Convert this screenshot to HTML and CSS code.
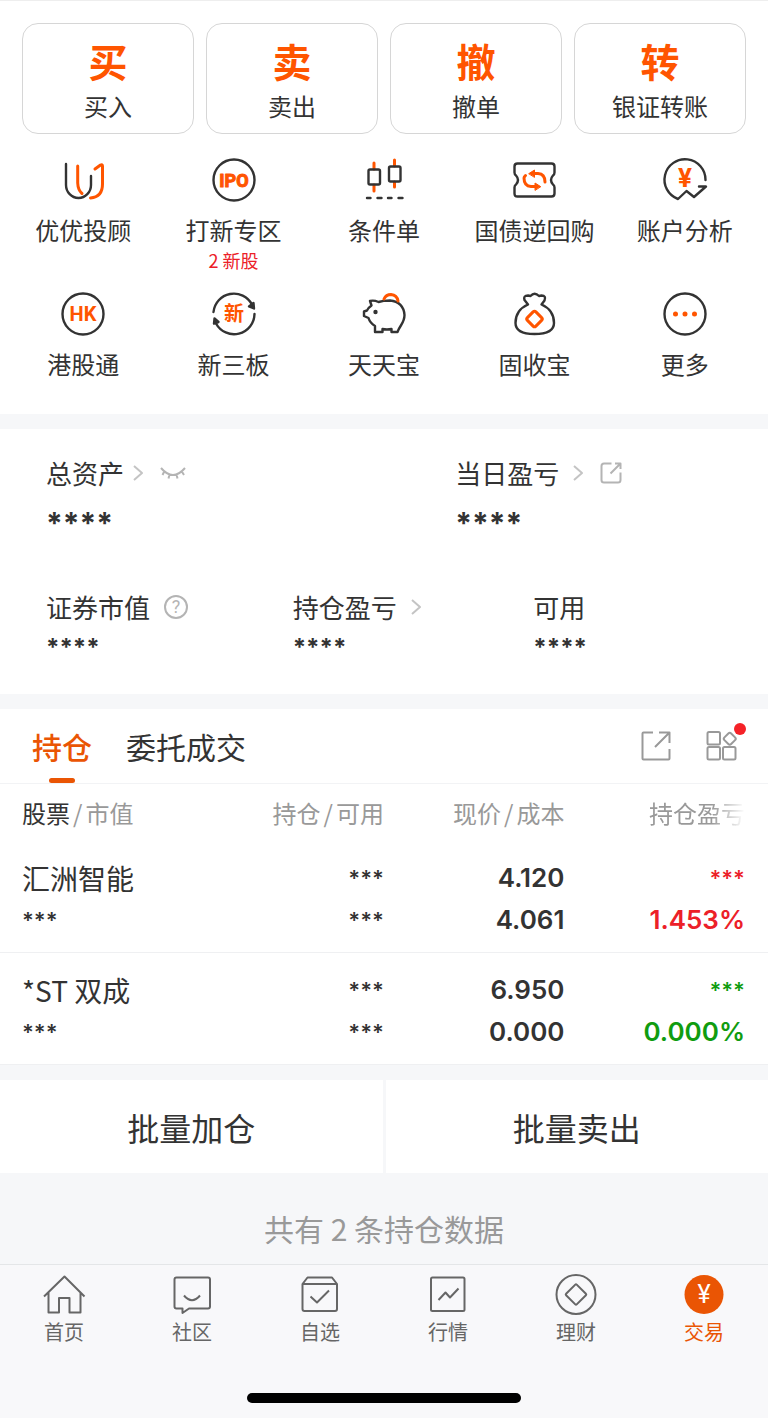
FILE: index.html
```html
<!DOCTYPE html>
<html lang="zh-CN">
<head>
	<meta charset="utf-8">
	<meta name="viewport" content="width=device-width, initial-scale=1">
	<title>交易</title>
	<link rel="stylesheet" href="styles.css">
</head>

<body>

<main>

<section class="panel trade">
  <div class="actions">
    <button><b>买</b><span>买入</span></button>
    <button><b>卖</b><span>卖出</span></button>
    <button><b>撤</b><span>撤单</span></button>
    <button><b>转</b><span>银证转账</span></button>
  </div>

  <nav class="services">
    <a href="#">
      <svg class="icon" viewBox="0 0 44 44">
        <path d="M5 6V27a12.500 13 0 0 0 25 0V18"/>
        <path class="hot" d="M16.700 8V25Q17 32 21 35.500M34 11l5.500-4q2-1 2 1V26q0 13-12 14"/>
      </svg>
      <span>优优投顾</span>
    </a>
    <a href="#">
      <svg class="icon" viewBox="0 0 44 44">
        <circle cx="22" cy="22" r="20.500"/>
        <text class="ipo" x="22" y="28.500">IPO</text>
      </svg>
      <span>打新专区</span>
      <em>2 新股</em>
    </a>
    <a href="#">
      <svg class="icon" viewBox="0 0 44 44">
        <path class="hot" d="M12 5V11M12 27V33M32.500 2V8M32.500 24V29"/>
        <rect x="6.500" y="11.500" width="11.500" height="15" rx="1.500"/>
        <rect x="27" y="8.500" width="11.500" height="15" rx="1.500"/>
        <path d="M5 40h3.500M15.500 40H19.500M26 40h3.500M36.500 40H40.500"/>
      </svg>
      <span>条件单</span>
    </a>
    <a href="#">
      <svg class="icon" viewBox="0 0 44 44">
        <path d="M5.500 5.500H39.500Q42.500 5.500 42.500 8.500V14.500Q42.500 16.500 41 17.500Q37 22 41 26.500Q42.500 27.500 42.500 29.500V35.500Q42.500 38.500 39.500 38.500H5.500Q2.500 38.500 2.500 35.500V29.500Q2.500 27.500 4 26.500Q8 22 4 17.500Q2.500 16.500 2.500 14.500V8.500Q2.500 5.500 5.500 5.500Z"/>
        <path class="hot" d="M20 15.500H26Q33 16 33 24M25 28.500H19Q12 28 12 20Q12 19 13.500 17.500"/>
        <path class="hot fill" d="M17 15.500l5.500-3.500v7zM28.500 28.500l-5.500-3.500v7z"/>
      </svg>
      <span>国债逆回购</span>
    </a>
    <a href="#">
      <svg class="icon" viewBox="0 0 44 44">
        <path d="M42.500 22A20.500 20.500 0 1 0 15 41L23.500 33L31 39L43 28.500H36"/>
        <text class="yen" x="22" y="29">¥</text>
      </svg>
      <span>账户分析</span>
    </a>
    <a href="#">
      <svg class="icon" viewBox="0 0 44 44">
        <circle cx="22" cy="22" r="20.500"/>
        <text class="hk" x="22" y="29">HK</text>
      </svg>
      <span>港股通</span>
    </a>
    <a href="#">
      <svg class="icon" viewBox="0 0 44 44">
        <path d="M1.500 20A20.500 20.500 0 0 1 40 12.500M42.500 22A20.500 20.500 0 0 1 4 31.500"/>
        <path class="solid" d="M37 14.500L41.500 11L42 16.500zM2 31.500L2.500 26.500L6.500 30z"/>
        <text class="xin" x="22" y="29">新</text>
      </svg>
      <span>新三板</span>
    </a>
    <a href="#">
      <svg class="icon" viewBox="0 0 44 44">
        <path d="M8 9Q12 8 16.500 10Q21 8.500 28 8.500C37 9 42 15 42.500 23C42.500 31 38 33 35.500 40H29.500V37Q25 38 20.500 37V40H13V34Q8 31 6.500 26L2 24V19.500L5 18.500Q6.500 15.500 9.500 13.500Z"/>
        <circle class="solid" cx="13.500" cy="20" r="1"/>
        <path class="hot" d="M22 7Q24 2.500 29 2.500Q35 3 36 9"/>
      </svg>
      <span>天天宝</span>
    </a>
    <a href="#">
      <svg class="icon" viewBox="0 0 44 44">
        <path d="M16 12.500C8 16 3.500 23 3.500 31C3.500 39 11 42 22.500 42S42 39 42 31C42 23 37.500 16 29.500 12.500L32.500 8.500Q34.500 3.500 29.500 3.500L27 4Q22.500-.5 18.500 4L16 3.500Q11 3.500 12.500 8Z"/>
        <rect class="hot" x="16.500" y="21" width="12" height="12" rx="2" transform="rotate(45 22.500 27)"/>
      </svg>
      <span>固收宝</span>
    </a>
    <a href="#">
      <svg class="icon" viewBox="0 0 44 44">
        <circle cx="22" cy="22" r="20.500"/>
        <path class="hot dots" d="M12.500 22h0M22 22h0M31.500 22h0"/>
      </svg>
      <span>更多</span>
    </a>
  </nav>
</section>

<section class="panel assets">
  <div class="totals">
    <div>
      <h3>总资产
        <svg class="arrow" viewBox="0 0 10 16"><path d="M1 1L9 8L1 15"/></svg>
        <button class="plain" aria-label="显示金额">
          <svg class="eye" viewBox="0 0 26 14"><path d="M1 2Q13 16 25 2M4.500 5L2.500 9M9.500 8.500L8.500 12.500M16.500 8.500L17.500 12.500M21.500 5L24 9"/></svg>
        </button>
      </h3>
      <p>****</p>
    </div>
    <div>
      <h3>当日盈亏
        <svg class="arrow wide" viewBox="0 0 10 16"><path d="M1 1L9 8L1 15"/></svg>
        <button class="plain" aria-label="分享">
          <svg class="share" viewBox="0 0 22 22"><path d="M11.500 1.500H4Q1.500 1.500 1.500 4V18Q1.500 20.500 4 20.500H18Q20.500 20.500 20.500 18V10.500M15 1.500H20.500V7M20 2L10.500 11.500"/></svg>
        </button>
      </h3>
      <p>****</p>
    </div>
  </div>
  <div class="details">
    <div>
      <h3>证券市值
        <button class="plain" aria-label="说明">
          <svg class="help" viewBox="0 0 24 24"><circle cx="12" cy="12" r="11"/><text x="12" y="18">?</text></svg>
        </button>
      </h3>
      <p>****</p>
    </div>
    <div>
      <h3>持仓盈亏
        <svg class="arrow wide" viewBox="0 0 10 16"><path d="M1 1L9 8L1 15"/></svg>
      </h3>
      <p>****</p>
    </div>
    <div>
      <h3>可用</h3>
      <p>****</p>
    </div>
  </div>
</section>

<section class="panel holdings">
  <div class="tabs">
    <button class="tab active">持仓</button>
    <button class="tab">委托成交</button>
    <button class="tool" aria-label="分享">
      <svg class="send" viewBox="0 0 30 30"><path d="M12 1.500H2.500Q1.500 1.500 1.500 2.500V27.500Q1.500 28.500 2.500 28.500H27.500Q28.500 28.500 28.500 27.500V18M18 1.500H28.500V12M28 2L14 16"/></svg>
    </button>
    <button class="tool" aria-label="更多功能">
      <svg class="apps" viewBox="0 0 32 30">
        <rect x="1.500" y="1" width="12.500" height="12.500" rx="1.500"/>
        <rect x="1.500" y="16" width="12.500" height="12.500" rx="1.500"/>
        <rect x="17" y="16" width="12.500" height="12.500" rx="1.500"/>
        <rect x="19" y="3" width="9.500" height="9.500" rx="2" transform="rotate(45 23.750 7.750)"/>
      </svg>
      <i class="dot"></i>
    </button>
  </div>

  <table>
    <colgroup>
      <col class="c-name">
      <col class="c-count">
      <col class="c-price">
      <col class="c-gain">
    </colgroup>
    <thead>
      <tr>
        <th><b>股票</b><i>/</i>市值</th>
        <th>持仓<i>/</i>可用</th>
        <th>现价<i>/</i>成本</th>
        <th><span class="fade">持仓盈亏</span></th>
      </tr>
    </thead>
    <tbody>
      <tr>
        <td><p class="name">汇洲智能</p><p class="stars">***</p></td>
        <td><p class="stars">***</p><p class="stars">***</p></td>
        <td><p>4.120</p><p>4.061</p></td>
        <td class="up"><p class="stars">***</p><p>1.453%</p></td>
      </tr>
      <tr>
        <td><p class="name">*ST 双成</p><p class="stars">***</p></td>
        <td><p class="stars">***</p><p class="stars">***</p></td>
        <td><p>6.950</p><p>0.000</p></td>
        <td class="down"><p class="stars">***</p><p>0.000%</p></td>
      </tr>
    </tbody>
  </table>
</section>

<div class="batch">
  <button>批量加仓</button>
  <button>批量卖出</button>
</div>

<p class="count">共有 2 条持仓数据</p>

</main>

<footer>
  <nav class="tabbar">
    <a href="#">
      <svg viewBox="0 0 44 44"><path d="M2 23.500L22.500 3.500L42.500 23.500M6.500 19.500V39.500H17V25H27.500V39.500H38.500V19.500"/></svg>
      <span>首页</span>
    </a>
    <a href="#">
      <svg viewBox="0 0 44 44"><path d="M6.500 4.500H38Q40 4.500 40 6.500V33.500Q40 35.500 38 35.500H19L12.500 40V35.500H6.500Q4.500 35.500 4.500 33.500V6.500Q4.500 4.500 6.500 4.500ZM14 22.500Q22 32 30 22.500"/></svg>
      <span>社区</span>
    </a>
    <a href="#">
      <svg viewBox="0 0 44 44"><path d="M4.500 11L9.500 4.500H34L39 11V36Q39 38 37 38H6.500Q4.500 38 4.500 36ZM4.500 11H39M12.500 23.500L19 29.500L31 17.500"/></svg>
      <span>自选</span>
    </a>
    <a href="#">
      <svg viewBox="0 0 44 44"><rect x="5" y="4.500" width="33.500" height="33.500" rx="1.500"/><path d="M12.500 27L19.500 19.500L24 24.500L32.500 15.500"/></svg>
      <span>行情</span>
    </a>
    <a href="#">
      <svg viewBox="0 0 44 44"><circle cx="22" cy="21.500" r="19.500"/><rect x="14.500" y="14" width="15" height="15" rx="1" transform="rotate(45 22 21.500)"/></svg>
      <span>理财</span>
    </a>
    <a href="#" class="current">
      <svg viewBox="0 0 44 44"><circle cx="22" cy="21.500" r="19.500"/><text x="22" y="30">¥</text></svg>
      <span>交易</span>
    </a>
  </nav>
  <div class="homebar"></div>
</footer>

</body>
</html>
```

FILE: styles.css
```css
* {
	box-sizing: border-box;
}

body {
	margin: 0;
	background-color: #f6f7f9;
	color: #333;
	font-family: "Noto Sans CJK SC", sans-serif;
	font-size: 24px;
	line-height: 36px;
}

h3, p {
	margin: 0;
}

h3 {
	font-weight: normal;
}

a {
	color: inherit;
	text-decoration: none;
}

button {
	margin: 0;
	padding: 0;
	border: 0;
	background: none;
	color: inherit;
	font: inherit;
}

i, em {
	font-style: normal;
}

svg {
	display: block;
	fill: none;
	stroke: currentColor;
	stroke-width: 2;
	stroke-linejoin: round;
	overflow: visible;
}

svg text {
	fill: currentColor;
	stroke: none;
	text-anchor: middle;
}

.panel {
	margin-bottom: 15px;
	background-color: #fff;
}

/* buy, sell, cancel, transfer */
.trade {
	border-top: 1px solid #eee;
	padding-top: 22px;
	padding-bottom: 22px;
}

.actions {
	display: grid;
	grid-template-columns: repeat(4, 1fr);
	gap: 12px;
	padding: 0 22px;
}

.actions button {
	display: flex;
	flex-direction: column;
	align-items: center;
	height: 111px;
	padding-top: 8px;
	border: 1px solid #d6d6d6;
	border-radius: 16px;
}

.actions b {
	color: #ff5500;
	font-size: 39px;
	line-height: 56px;
}

.services {
	display: grid;
	grid-template-columns: repeat(5, 1fr);
	padding: 24px 8px 0;
}

.services a {
	display: flex;
	flex-direction: column;
	align-items: center;
	height: 134px;
}

.services a:nth-child(n+6) {
	height: 100px;
}

.services span {
	margin-top: 10px;
}

.services em {
	color: #ec2028;
	font-size: 18px;
	line-height: 24px;
}

.icon {
	width: 44px;
	height: 44px;
	stroke-width: 2.4;
	stroke-linecap: round;
}

.icon .hot {
	stroke: #ff5500;
	stroke-width: 3;
}

.icon .fill {
	fill: #ff5500;
	stroke-width: 1;
}

.icon .solid {
	fill: currentColor;
}

.icon .dots {
	stroke-width: 5;
}

.icon text {
	fill: #ff5500;
	stroke: #ff5500;
	stroke-width: 0;
	font-family: Roboto, sans-serif;
	font-weight: bold;
}

.icon .ipo {
	stroke-width: 1;
	font-size: 18px;
}

.icon .hk {
	font-size: 20px;
}

.icon .yen {
	font-size: 26px;
}

.icon .xin {
	font-family: "Noto Sans CJK SC", sans-serif;
	font-size: 20px;
}

/* account totals */
.assets {
	padding: 25px 0 24px 46px;
}

.totals, .details {
	display: grid;
}

.totals {
	grid-template-columns: 17fr 13fr;
}

.details {
	grid-template-columns: 41fr 40fr 39fr;
	margin-top: 42px;
}

.assets h3 {
	display: flex;
	align-items: center;
	font-size: 26px;
	line-height: 38px;
}

.assets p {
	font-family: Inter, sans-serif;
	font-weight: bold;
}

.totals p {
	padding-top: 8px;
	font-size: 30px;
	line-height: 46px;
}

.details p {
	font-size: 24px;
	line-height: 44px;
}

.arrow {
	width: 10px;
	height: 16px;
	margin: 0 17px 0 9px;
	color: #c4c4c4;
}

.arrow.wide {
	margin-left: 14px;
}

.plain {
	color: #b4b4b4;
}

.eye {
	width: 26px;
	height: 14px;
}

.share {
	width: 22px;
	height: 22px;
}

.help {
	width: 24px;
	height: 24px;
	margin-left: 14px;
}

.help text {
	font-family: Roboto, sans-serif;
	font-size: 18px;
}

/* positions */
.tabs {
	display: flex;
	align-items: center;
	height: 75px;
	padding: 0 30px 0 32px;
	border-bottom: 1px solid #f2f3f5;
}

.tab {
	position: relative;
	height: 74px;
	margin-right: 34px;
	font-size: 30px;
}

.tab:nth-child(2) {
	margin-right: auto;
}

.tab.active {
	color: #ea5504;
	font-weight: 500;
}

.tab.active::after {
	content: "";
	position: absolute;
	left: 17px;
	bottom: 0;
	width: 26px;
	height: 5px;
	border-radius: 3px;
	background-color: #ea5504;
}

.tool {
	position: relative;
	color: #999;
}

.send {
	width: 30px;
	height: 30px;
	margin-right: 35px;
}

.apps {
	width: 32px;
	height: 30px;
}

.dot {
	position: absolute;
	top: -8px;
	right: -8px;
	width: 12px;
	height: 12px;
	border-radius: 50%;
	background-color: #f52228;
}

table {
	width: 100%;
	border-collapse: collapse;
	table-layout: fixed;
}

.c-name {
	width: 30%;
}

.c-count {
	width: 20%;
}

.c-price {
	width: 23.5%;
}

.c-gain {
	width: 26.5%;
}

th, td {
	padding: 0;
	text-align: right;
}

th {
	height: 57px;
	color: #999;
	font-weight: normal;
}

th b {
	color: #333;
	font-weight: normal;
}

th i {
	padding: 0 3px;
}

th:first-child, td:first-child {
	padding-left: 22px;
	text-align: left;
}

th:last-child, td:last-child {
	padding-right: 23px;
}

.fade {
	-webkit-mask-image: linear-gradient(to right, #000 65%, transparent);
	mask-image: linear-gradient(to right, #000 65%, transparent);
}

td {
	padding-top: 16px;
	padding-bottom: 11px;
	font-family: Inter, sans-serif;
	font-size: 26px;
	font-weight: 600;
	line-height: 42px;
}

tbody tr {
	border-bottom: 1px solid #eff0f2;
}

td .name {
	font-family: "Noto Sans CJK SC", sans-serif;
	font-size: 28px;
	font-weight: normal;
}

td .stars {
	font-size: 22px;
}

.up {
	color: #ec2028;
}

.down {
	color: #109c10;
}

.batch {
	display: grid;
	grid-template-columns: 1fr 1fr;
	gap: 3px;
}

.batch button {
	height: 93px;
	background-color: #fff;
	font-size: 32px;
}

.count {
	padding-top: 33px;
	color: #999;
	font-size: 30px;
	line-height: 44px;
	text-align: center;
}

/* bottom bar */
footer {
	margin-top: 14px;
	padding: 8px 0 15px;
	border-top: 1px solid #e4e6e8;
	background-color: #f8f8fa;
}

.tabbar {
	display: grid;
	grid-template-columns: repeat(6, 1fr);
	color: #666;
	font-size: 20px;
	line-height: 30px;
}

.tabbar a {
	display: flex;
	flex-direction: column;
	align-items: center;
}

.tabbar svg {
	width: 44px;
	height: 44px;
}

.tabbar .current {
	color: #ea5504;
}

.current circle {
	fill: #ea5504;
	stroke: none;
}

.current text {
	fill: #fff;
	font-family: Roboto, sans-serif;
	font-size: 25px;
}

.homebar {
	width: 274px;
	height: 10px;
	margin: 46px auto 0;
	border-radius: 5px;
	background-color: #000;
}
```
